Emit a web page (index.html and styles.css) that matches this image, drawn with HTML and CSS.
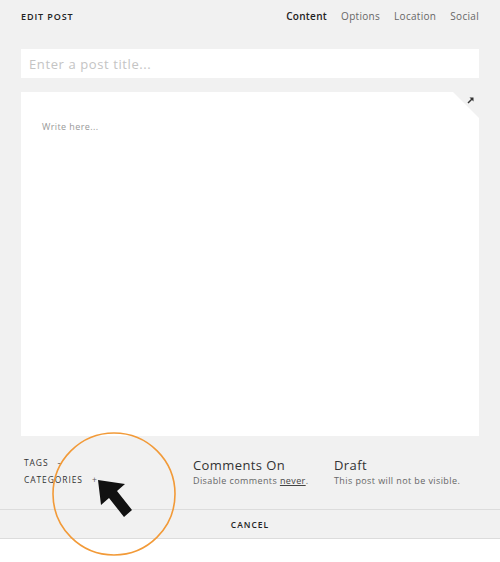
FILE: index.html
```html
<!DOCTYPE html>
<html lang="en">
<head>
  <meta charset="UTF-8" />
  <meta name="viewport" content="width=device-width, initial-scale=1.0"/>
  <title>Edit Post</title>
  <link rel="stylesheet" href="styles.css">
</head>
<body>
  <div class="editor-panel">
    <div class="top-bar">
      <h1>EDIT POST</h1>
      <nav class="tabs">
        <span class="tab active">Content</span>
        <span class="tab">Options</span>
        <span class="tab">Location</span>
        <span class="tab">Social</span>
      </nav>
    </div>

    <div class="title-field">Enter a post title...</div>

    <div class="body-wrap">
      <div class="body-field">
        <p class="placeholder">Write here...</p>
      </div>
      <svg class="expand" width="7" height="7" viewBox="0 0 7 7">
        <path d="M1 6 L5 2" stroke="#333" stroke-width="1.5"/>
        <path d="M2.5 0.5 H6.5 V4.5 Z" fill="#333"/>
      </svg>
    </div>

    <div class="meta-row">
      <div class="taxonomy">
        <div class="tax-line">TAGS <span class="sign">&ndash;</span></div>
        <div class="tax-line">CATEGORIES <span class="sign">+</span></div>
      </div>
      <div class="setting comments">
        <div class="setting-title">Comments On</div>
        <div class="setting-note">Disable comments <u>never</u>.</div>
      </div>
      <div class="setting">
        <div class="setting-title">Draft</div>
        <div class="setting-note">This post will not be visible.</div>
      </div>
    </div>

    <div class="cancel-bar">CANCEL</div>
  </div>

  <svg class="highlight" width="130" height="130" viewBox="0 0 130 130">
    <circle cx="65" cy="65" r="61" fill="none" stroke="#f29a38" stroke-width="1.6"/>
    <path d="M49 51 L76 55 L68 62 L83 81 L75 88 L60 69 L52 76 Z" fill="#111"/>
  </svg>
</body>
</html>
```

FILE: styles.css
```css
* { margin: 0; padding: 0; box-sizing: border-box; }

body {
  font-family: 'Open Sans', 'Lato', sans-serif;
  background: #ffffff;
  color: #333;
  width: 500px;
  height: 562px;
  position: relative;
  overflow: hidden;
}

.editor-panel {
  background: #f1f1f1;
}

.top-bar {
  display: flex;
  justify-content: space-between;
  align-items: center;
  height: 32px;
  padding: 0 21px;
}

h1 {
  font-size: 9px;
  font-weight: 600;
  letter-spacing: 0.9px;
  color: #222;
}

.tabs {
  display: flex;
  gap: 14px;
}

.tab {
  font-size: 10px;
  color: #666;
  letter-spacing: 0.3px;
}

.tab.active {
  color: #222;
  font-weight: 600;
}

.title-field {
  margin: 17px 21px 0;
  height: 29px;
  background: #fff;
  padding: 0 8px;
  display: flex;
  align-items: center;
  font-size: 13px;
  color: #c4c4c4;
  letter-spacing: 0.6px;
}

.body-wrap {
  position: relative;
  margin: 14px 21px 0;
}

.body-field {
  height: 344px;
  background: #fff;
  clip-path: polygon(0 0, calc(100% - 26px) 0, 100% 26px, 100% 100%, 0 100%);
  padding: 28px 21px;
}

.body-wrap .expand {
  position: absolute;
  top: 5px;
  right: 5px;
}

.placeholder {
  font-size: 9px;
  color: #999;
  letter-spacing: 0.4px;
}

.meta-row {
  display: flex;
  height: 73px;
  padding: 21px 0 0 24px;
}

.taxonomy {
  width: 169px;
  display: flex;
  flex-direction: column;
  gap: 5px;
}

.tax-line {
  font-size: 8.5px;
  letter-spacing: 0.9px;
  line-height: 12px;
  color: #333;
}

.sign {
  margin-left: 6px;
  color: #555;
}

.setting.comments {
  width: 141px;
}

.setting-title {
  font-size: 13px;
  color: #333;
  letter-spacing: 0.4px;
  line-height: 17px;
}

.setting-note {
  font-size: 9px;
  color: #666;
  letter-spacing: 0.4px;
}

.setting-note u {
  color: #444;
}

.cancel-bar {
  height: 30px;
  border-top: 1px solid #dcdcdc;
  border-bottom: 1px solid #dcdcdc;
  display: flex;
  justify-content: center;
  align-items: center;
  font-size: 8.5px;
  font-weight: 600;
  letter-spacing: 1px;
  color: #222;
}

.highlight {
  position: absolute;
  left: 49px;
  top: 429px;
}
```
